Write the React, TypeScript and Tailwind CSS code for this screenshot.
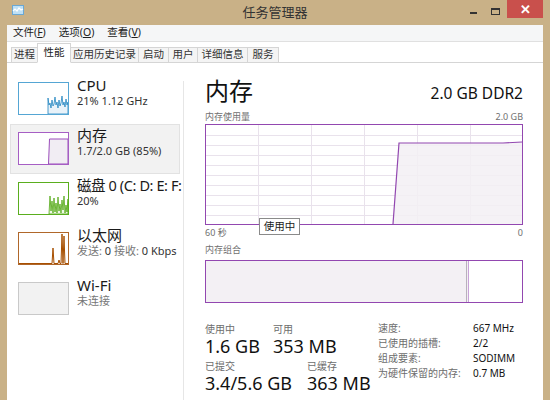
import React from "react";

function TitleIcon() {
  return (
    <svg width="12" height="10" viewBox="0 0 12 10">
      <rect x="0.5" y="0.5" width="11" height="9" fill="#bfe0f5" stroke="#6aa8d4" />
      <polyline points="1,6 3,4 5,6 7,3 9,5 11,4" fill="none" stroke="#ffffff" strokeWidth="1.2" />
    </svg>
  );
}

function Thumb({ border, bg, children }: { border: string; bg: string; children?: React.ReactNode }) {
  return (
    <div className={`w-[51px] h-[33px] border ${border} ${bg} shrink-0`}>
      <svg width="49" height="31" viewBox="0 0 49 31" className="block">
        {children}
      </svg>
    </div>
  );
}

function SideItem({
  thumb,
  title,
  sub,
  selected,
  titleClass,
}: {
  thumb: React.ReactNode;
  title: string;
  sub: React.ReactNode;
  selected?: boolean;
  titleClass?: string;
}) {
  return (
    <div
      className={`mx-[3px] h-[50px] flex pl-[7px] border ${
        selected ? "bg-[#f2f2f2] border-[#e2e2e2]" : "border-transparent"
      }`}
    >
      <div className="mt-[7px]">{thumb}</div>
      <div className="ml-[8px] mt-[1px] flex flex-col whitespace-nowrap">
        <div className={titleClass ?? "text-[15px] leading-[18px] text-[#1a1a1a]"}>{title}</div>
        <div className="text-[11px] leading-[14px] text-[#333]">{sub}</div>
      </div>
    </div>
  );
}

function Tab({ label, w, active }: { label: string; w: string; active?: boolean }) {
  return (
    <div
      className={`${w} -ml-px first:ml-0 flex items-center justify-center text-[10.5px] border border-[#d5d5d5] ${
        active
          ? "h-[20px] bg-white border-b-white relative z-10"
          : "h-[16px] bg-[#f4f4f4] text-[#333]"
      }`}
    >
      {label}
    </div>
  );
}

function Stat({ label, value, w }: { label: string; value: string; w?: string }) {
  return (
    <div className={w}>
      <div className="text-[10px] leading-[14px] text-[#6d6d6d]">{label}</div>
      <div className="text-[18px] leading-[20px] text-[#111]">{value}</div>
    </div>
  );
}

export default function App() {
  const vlines = [1, 2, 3, 4, 5];
  const hlines = [1, 2, 3, 4, 5, 6, 7, 8, 9];
  return (
    <div className="w-[550px] h-[400px] bg-[#c9b187] flex flex-col overflow-hidden font-['Noto_Sans','Noto_Sans_CJK_SC',sans-serif] text-[#1a1a1a]">
      {/* Title bar */}
      <div className="h-[25px] shrink-0 flex">
        <div className="w-[100px] pl-[12px] pt-[5px]">
          <TitleIcon />
        </div>
        <div className="flex-1 text-center text-[13px] leading-[16px] pt-[4px] text-[#333]">任务管理器</div>
        <div className="w-[100px] flex justify-end pr-[7px]">
          <div className="w-[7px] h-[2px] bg-[#333] mt-[12px]" />
          <div className="ml-[14px] mt-[8px] w-[9px] h-[7px] border border-[#333] border-t-2" />
          <div className="ml-[7px] w-[36px] h-[18px] bg-[#c9504c] flex items-center justify-center text-white text-[13px] leading-none font-bold">
            ✕
          </div>
        </div>
      </div>

      {/* Window body */}
      <div className="flex-1 mx-[7px] bg-white flex flex-col min-h-0">
        {/* Menu bar */}
        <div className="h-[17px] shrink-0 bg-[#f5f6f7] border-b border-[#e0e0e0] flex items-center text-[10.5px] text-[#222]">
          <span className="ml-[6px]">
            文件(<span className="underline">F</span>)
          </span>
          <span className="ml-[13px]">
            选项(<span className="underline">O</span>)
          </span>
          <span className="ml-[13px]">
            查看(<span className="underline">V</span>)
          </span>
        </div>

        {/* Tabs */}
        <div className="h-[21px] shrink-0 flex items-end pl-[4px] border-b border-[#d5d5d5]">
          <div className="flex items-end -mb-px">
            <Tab label="进程" w="w-[27px]" />
            <Tab label="性能" w="w-[34px]" active />
            <Tab label="应用历史记录" w="w-[69px]" />
            <Tab label="启动" w="w-[31px]" />
            <Tab label="用户" w="w-[30px]" />
            <Tab label="详细信息" w="w-[51px]" />
            <Tab label="服务" w="w-[32px]" />
          </div>
        </div>

        {/* Content */}
        <div className="flex-1 flex min-h-0">
          {/* Sidebar */}
          <div className="w-[176px] shrink-0 flex flex-col pt-[11px] overflow-hidden">
            <SideItem
              title="CPU"
              sub="21% 1.12 GHz"
              thumb={
                <Thumb border="border-[#55a6d4]" bg="bg-white">
                  <polygon
                    points="29,31 29,15 30,22 31,20 32,25 33,17 34,23 35,21 36,14 37,22 38,19 39,25 40,17 41,23 42,20 43,13 44,22 45,19 46,24 47,16 48,22 49,19 49,31"
                    fill="#e8f2f9"
                    stroke="#1f84c0"
                    strokeWidth="0.8"
                  />
                </Thumb>
              }
            />
            <SideItem
              selected
              title="内存"
              sub="1.7/2.0 GB (85%)"
              thumb={
                <Thumb border="border-[#a65ec4]" bg="bg-white">
                  <polygon points="29.5,31 30.5,6 49,6 49,31" fill="#f1edf3" stroke="#9b4dbb" strokeWidth="1" />
                </Thumb>
              }
            />
            <SideItem
              title="磁盘 0 (C: D: E: F:"
              titleClass="text-[14.5px] leading-[18px] tracking-[-0.4px] text-[#1a1a1a]"
              sub="20%"
              thumb={
                <Thumb border="border-[#5aae1e]" bg="bg-white">
                  <polygon
                    points="30,31 31,13 32,28 33,18 34,30 35,15 36,29 37,20 38,30 39,14 40,28 41,21 42,30 43,17 44,27 45,13 46,30 47,22 48,29 49,16 49,31"
                    fill="#eef7e6"
                    stroke="#4da60c"
                    strokeWidth="0.8"
                  />
                </Thumb>
              }
            />
            <SideItem
              title="以太网"
              sub={
                <>
                  <span className="text-[#777]">发送:</span> 0 <span className="text-[#777]">接收:</span> 0 Kbps
                </>
              }
              thumb={
                <Thumb border="border-[#b0672a]" bg="bg-white">
                  <polyline
                    points="0,30.5 33,30.5 34,15 35,30.5 39,30.5 40,27 41,30.5 42,30.5 43,1 44,30.5 45,3 46,30.5 49,30.5"
                    fill="#f7ede4"
                    stroke="#a74f01"
                    strokeWidth="1"
                  />
                </Thumb>
              }
            />
            <SideItem
              title="Wi-Fi"
              sub={<span className="text-[#777]">未连接</span>}
              thumb={<Thumb border="border-[#c9c9c9]" bg="bg-[#f2f2f2]" />}
            />
          </div>

          {/* Separator */}
          <div className="w-px bg-[#e6e6e6] mt-[18px] shrink-0" />

          {/* Main panel */}
          <div className="flex-1 flex flex-col pl-[21px] pr-[20px] pt-[14px] min-w-0">
            <div className="flex items-end justify-between h-[28px]">
              <div className="text-[24px] leading-[28px] text-[#111]">内存</div>
              <div className="text-[15.5px] leading-[20px] text-[#111] mb-[2px]">2.0 GB DDR2</div>
            </div>
            <div className="mt-[5px] h-[13px] flex justify-between text-[9px] leading-[13px] text-[#707070]">
              <span>内存使用量</span>
              <span>2.0 GB</span>
            </div>

            {/* Chart */}
            <div className="mt-px relative h-[101px] border border-[#9247b0]">
              <svg width="316" height="99" viewBox="0 0 316 99" className="block">
                {vlines.map((i) => (
                  <line key={"v" + i} x1={i * 53 - 0.5} y1="0" x2={i * 53 - 0.5} y2="99" stroke="#e9e2ec" strokeWidth="1" />
                ))}
                {hlines.map((i) => (
                  <line key={"h" + i} x1="0" y1={i * 10 + 0.5} x2="316" y2={i * 10 + 0.5} stroke="#e9e2ec" strokeWidth="1" />
                ))}
                <polygon points="187,99 193,18 297,18 316,17 316,99" fill="#f3f0f5" fillOpacity="0.85" />
                <polyline points="187,99 193,18 297,18 316,17" fill="none" stroke="#9247b0" strokeWidth="1.2" />
              </svg>
              <div className="absolute left-[53px] top-[93px] w-[41px] h-[17px] border border-[#8a8a8a] bg-white flex items-center justify-center text-[10.5px] text-[#222]">
                使用中
              </div>
            </div>
            <div className="mt-[2px] h-[12px] flex justify-between text-[9px] leading-[12px] text-[#707070]">
              <span>60 秒</span>
              <span>0</span>
            </div>

            <div className="mt-[5px] h-[12px] text-[9px] leading-[12px] text-[#707070]">内存组合</div>
            <div className="mt-[4px] h-[43px] border border-[#9247b0] flex">
              <div className="w-[261px] bg-[#f3f0f4] border-r border-[#b9b0bd]" />
              <div className="w-px bg-[#f3f0f4]" />
              <div className="w-px bg-[#c8a2d8]" />
              <div className="flex-1 bg-white" />
            </div>

            {/* Stats */}
            <div className="mt-[19px] flex">
              <div className="w-[173px] shrink-0 flex flex-col">
                <div className="flex">
                  <Stat w="w-[68px]" label="使用中" value="1.6 GB" />
                  <Stat label="可用" value="353 MB" />
                </div>
                <div className="flex mt-[3px]">
                  <Stat w="w-[102px]" label="已提交" value="3.4/5.6 GB" />
                  <Stat label="已缓存" value="363 MB" />
                </div>
              </div>
              <div className="-mt-[1px] grid grid-cols-[95px_auto] auto-rows-[15px] text-[10px] leading-[15px]">
                <span className="text-[#6d6d6d]">速度:</span>
                <span className="text-[#111]">667 MHz</span>
                <span className="text-[#6d6d6d]">已使用的插槽:</span>
                <span className="text-[#111]">2/2</span>
                <span className="text-[#6d6d6d]">组成要素:</span>
                <span className="text-[#111]">SODIMM</span>
                <span className="text-[#6d6d6d]">为硬件保留的内存:</span>
                <span className="text-[#111]">0.7 MB</span>
              </div>
            </div>
          </div>
        </div>
      </div>
    </div>
  );
}
